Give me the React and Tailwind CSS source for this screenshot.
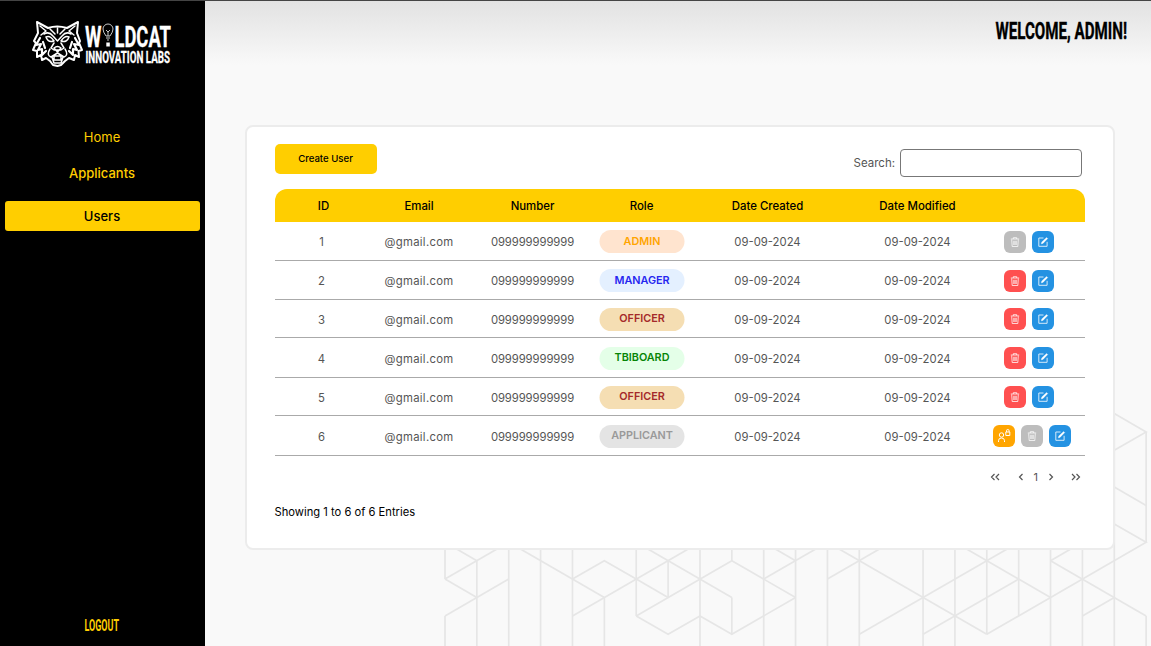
import React from "react";

const X = (i) => 445 + 31.87 * i;
const Y = (j) => 560.7 + 18.4 * j;
const lines = [
  [0,-1,0,1],[0,3,0,5],[1,0,1,5],[2,-1,2,5],[3,-1,3,5],[4,-1,4,5],[5,2,5,5],[6,-1,6,3],[7,0,7,2],[8,-1,8,5],[9,-1,9,0],[9,2,9,4],[10,-1,10,5],[11,-1,11,5],
  [0,-1,1,0],[0,1,2,-1],[0,1,1,2],[0,3,2,1],[2,-1,5,2],[4,1,5,0,6,1],[4,3,8,-1],[6,1,7,2],[6,-1,9,2],[6,3,9,0,11,2],[6,3,7,4,8,3,9,4,11,2],[10,-1,11,0],[10,1,12,-1],
  [12,-1,12,5],[13,-1,13,5],[15,-1,15,5],[16,-1,16,5],[17,-1,17,4],[18,-1,18,3],[19,-1,19,5],[20,-1,20,5],[21,-8,21,5],[22,-7,22,-1],[22,3,22,5],
  [21,-8,22,-7,21,-6],[21,-4,22,-3],[21,-2,22,-1,17,4],[12,1,14,-1],[12,-1,17,4],[13,4,18,-1],[16,-1,19,2],[15,4,18,1],[19,0,20,-1],[19,0,22,3],[20,3,21,2],
];

function Pattern() {
  return (
    <svg className="absolute inset-0 h-full w-full" viewBox="0 0 1151 646" fill="none" stroke="#e6e6e6" strokeWidth="1.7">
      {lines.map((l, k) => {
        const pts = [];
        for (let n = 0; n < l.length; n += 2) pts.push(`${X(l[n])},${Y(l[n + 1])}`);
        return <polyline key={k} points={pts.join(" ")} />;
      })}
    </svg>
  );
}

const narrow = "'Liberation Sans Narrow', Roboto, sans-serif";

function Logo() {
  return (
    <svg className="ml-8 mt-[19px] h-[48px] w-[141px] shrink-0 overflow-visible" viewBox="32 20 141 48" fill="none">
      <g stroke="#fff" strokeWidth="1.5" strokeLinejoin="round" strokeLinecap="round">
        <path d="M37 22 L48 28 Q57 25 67 28 L78 22 L77 33 L80 41 L79 43 L82 50 L78.500 51 L79 57 L75 55 L74 60 L69 58 L65 61 L61 65 L57.500 66 L53 65 L50 61 L46 58 L42 60 L41 55 L37 57 L37 51 L33 50 L36 43 L34 41 L38 33 Z" strokeWidth="2" />
        <path d="M40 26 L46 31 L41 35 M75 26 L69 31 L74 35" />
        <path d="M44 34 Q49 31 53 36 L57.500 41 L62 36 Q66 31 71 34 M50 29 L55 34 M65 29 L60 34 M57.500 28 V33" />
        <path d="M46 37 Q50 35 54 41 Q48 43 46 37 Z M69 37 Q65 35 61 41 Q67 43 69 37 Z" />
        <path d="M54 43 L51 48 L54 50 H61 L64 48 L61 43 M54 48 Q57.500 45 61 48 L57.500 52 Z" />
        <path d="M50 49 Q46 55 51 57 L57.500 53 L64 57 Q69 55 65 49 M52 57 L54 63 H61 L63 57 M54 56 H61 V60 H54 Z" />
        <path d="M40 38 L36 45 L41 44 L38 50 L42 49 L42 55 L46 51 M75 38 L79 45 L74 44 L77 50 L73 49 L73 55 L69 51 M43 42 L45 48 M72 42 L70 48" strokeWidth="2.2" />
      </g>
      <g fill="#fff" stroke="#fff" strokeWidth="0.3" fontFamily={narrow} fontWeight="700">
        <text x="85" y="46.500" fontSize="29" textLength="16.500" lengthAdjust="spacingAndGlyphs">W</text>
        <text x="114.500" y="46.500" fontSize="29" textLength="56.500" lengthAdjust="spacingAndGlyphs">LDCAT</text>
        <text x="85.500" y="63" fontSize="16" textLength="84.500" lengthAdjust="spacingAndGlyphs">INNOVATION LABS</text>
      </g>
      <path d="M106 36 Q103 32 103 29 A5 5 0 0 1 113 29 Q113 32 110 36 Z M106 38 H110 M107 40 H109 M106 30 L108 32 L110 30 M108 32 V36" stroke="#ddd" strokeWidth="0.9" />
      <path d="M106.300 42.500 H109.800 V46.500 H106.300 Z" fill="#fff" />
    </svg>
  );
}

function EditIcon() {
  return (
    <svg viewBox="0 0 12 12" className="h-3 w-3" fill="none" stroke="#e8f4fd" strokeWidth="0.9">
      <path d="M6.500 2H1.800v8.300h8.300V5.800" />
      <path d="M4.300 8l.4-1.900 4.900-4.700 1.200 1.200-4.800 4.800z" fill="#fff" strokeWidth="0.300" />
    </svg>
  );
}

function TrashIcon() {
  return (
    <svg viewBox="0 0 12 12" className="h-3 w-3" fill="none" stroke="#fff" strokeOpacity="0.85" strokeWidth="0.9">
      <path d="M1.800 3h8.400M4.300 3V1.700h3.400V3M2.700 3.500l.5 7h5.600l.5-7M4.800 4.800v4.200M6 4.800v4.200M7.200 4.800v4.200" />
    </svg>
  );
}

function UserLockIcon() {
  return (
    <svg viewBox="0 0 14 14" className="h-3.5 w-3.5" fill="none" stroke="#fff" strokeWidth="1">
      <circle cx="4.500" cy="6" r="2.200" />
      <path d="M1.500 13v-1.300Q1.500 9 4.500 9T7.500 11.700V13" />
      <path d="M8.800 3h4v3.500h-4zM9.500 3V1.800a1.300 1.300 0 0 1 2.600 0V3" />
    </svg>
  );
}

function Chevrons({ d, className = "" }) {
  return (
    <svg viewBox="0 0 10 8" className={`h-2 w-2.5 ${className}`} fill="none" stroke="#555" strokeWidth="1.200">
      <path d={d} />
    </svg>
  );
}

const grid = "grid grid-cols-[94px_101px_126px_92px_160px_140px_97px] items-center text-center";
const rows = [
  ["ADMIN", "bg-[#ffe4cf] text-[#ffa500]", "h-[39px]", false],
  ["MANAGER", "bg-[#e4f0ff] text-[#2525f0]", "h-[39px]", true],
  ["OFFICER", "bg-[#f5deb3] text-[#a52a2a]", "h-[38px]", true],
  ["TBIBOARD", "bg-[#e4ffe8] text-[#078507]", "h-[40px]", true],
  ["OFFICER", "bg-[#f5deb3] text-[#a52a2a]", "h-[38px]", true],
  ["APPLICANT", "bg-[#e4e4e4] text-[#999999]", "h-[40px]", false],
];

function ActionButton({ color, children }) {
  return <button className={`flex h-[22px] w-[22px] items-center justify-center rounded-[6px] ${color}`}>{children}</button>;
}

function Nav({ children, className }) {
  return <a className={`flex items-center justify-center pr-px text-[13px] ${className}`}>{children}</a>;
}

export default function App() {
  return (
    <div className="relative flex h-[646px] w-[1151px] overflow-hidden border-t border-[#444] bg-[#f9f9f9] font-[Inter,sans-serif]">
      <div className="pointer-events-none absolute inset-x-0 -top-px h-[646px]"><Pattern /></div>
      <aside className="relative flex w-[205px] shrink-0 flex-col bg-black">
        <Logo />
        <nav className="mt-[54px] flex flex-col px-[5px] text-[#ffce00]">
          <Nav className="h-[30px] pt-px">Home</Nav>
          <Nav className="mt-[7px] h-[30px] font-medium">Applicants</Nav>
          <Nav className="mt-[12px] h-[30px] rounded-[3px] bg-[#ffce00] pt-px font-medium text-black">Users</Nav>
        </nav>
        <div className="mb-[11px] mt-auto flex justify-center pr-[2px]">
          <svg className="h-[20px] w-[36px] overflow-visible" viewBox="0 0 36 20"><text x="0.500" y="15.500" fill="#ffce00" fontSize="16" fontWeight="700" fontFamily={narrow} textLength="34.500" lengthAdjust="spacingAndGlyphs">LOGOUT</text></svg>
        </div>
      </aside>
      <main className="relative flex grow flex-col">
        <header className="flex h-[64px] justify-end bg-linear-to-b from-[#e2e2e2] to-[#f9f9f9] pr-[23px] pt-[15px]">
          <svg className="h-[32px] w-[133px] overflow-visible" viewBox="0 0 133 32"><text x="0.5" y="23" stroke="#000" strokeWidth="0.4" fontSize="24.500" fontWeight="700" fontFamily={narrow} textLength="131.500" lengthAdjust="spacingAndGlyphs">WELCOME, ADMIN!</text></svg>
        </header>
        <section className="ml-[40px] mt-[60px] flex h-[425px] w-[870px] flex-col rounded-[8px] border-2 border-[#ececec] bg-white pl-[27.5px] pr-[27px] pt-[17px]">
          <div className="flex h-[46px] justify-between pr-[4px]">
            <button className="h-[30px] w-[102px] rounded-[5px] bg-[#ffce00] pt-px text-[9.600px] font-medium">Create User</button>
            <label className="mt-[5px] flex h-[28px] items-center gap-[5px] text-[11.500px] text-[#555]"><span className="pt-px">Search:</span>
              <input className="h-[28px] w-[182px] rounded-[4px] border border-[#777] bg-white" />
            </label>
          </div>
          <div className={`${grid} mt-[-1px] h-[33px] w-[810px] rounded-t-[12px] bg-[#ffce00] pt-[2px] text-[11.400px] font-medium text-black`}>
            <span className="pl-1">ID</span><span>Email</span><span>Number</span><span>Role</span><span>Date Created</span><span>Date Modified</span><span />
          </div>
          {rows.map(([role, color, height, canDelete], i) => (
            <div key={i} className={`${grid} ${height} w-[810px] border-b border-[#aaa] pt-px text-[11.300px] text-[#555]`}>
              <span className="pt-[2px]">{i + 1}</span><span className="pt-[2px] tracking-[0.3px]">@gmail.com</span><span className="pt-[2px] tracking-[-0.08px]">099999999999</span>
              <span className={`mx-auto flex h-[23px] w-[85px] translate-x-[0.5px] items-center justify-center rounded-full pt-px text-[10.800px] font-semibold ${color}`}>{role}</span>
              <span className="pt-[2px]">09-09-2024</span><span className="pt-[2px]">09-09-2024</span>
              <span className={`flex justify-center gap-[6px] ${i === 5 ? "-translate-x-[4px]" : "-translate-x-[7px]"}`}>
                {i === 5 && <ActionButton color="bg-[#ffa500]"><UserLockIcon /></ActionButton>}
                <ActionButton color={canDelete ? "bg-[#ff5050]" : "bg-[#bdbdbd]"}><TrashIcon /></ActionButton>
                <ActionButton color="bg-[#2492e2]"><EditIcon /></ActionButton>
              </span>
            </div>
          ))}
          <div className="mt-[11px] flex h-5 items-center justify-end pr-[5px] text-[11px] text-[#555]">
            <Chevrons d="M4.500 1L1.500 4l3 3M9 1L6 4l3 3" />
            <Chevrons className="ml-[16px]" d="M6.500 1L3.500 4l3 3" />
            <span className="mx-[8px]">1</span>
            <Chevrons className="mr-[15px]" d="M3.500 1L6.500 4l-3 3" />
            <Chevrons d="M1 1L4 4l-3 3M5.500 1L8.500 4l-3 3" />
          </div>
          <div className="mt-[15px] text-[11.200px] leading-5 text-black">Showing 1 to 6 of 6 Entries</div>
        </section>
      </main>
    </div>
  );
}
